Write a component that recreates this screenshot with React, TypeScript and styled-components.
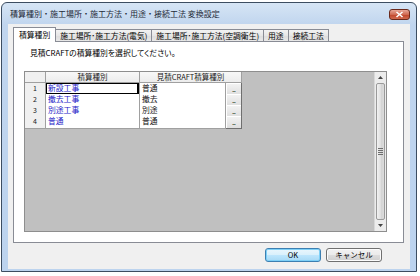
import styled, { createGlobalStyle } from "styled-components";

const GlobalStyle = createGlobalStyle`
  html, body {
    margin: 0;
    padding: 0;
    background: #ffffff;
  }
  body {
    font-family: "Noto Sans CJK JP", "Noto Sans", sans-serif;
    color: #000;
  }
`;

const Window = styled.div`
  box-sizing: border-box;
  width: 416px;
  height: 270px;
  margin: 2px 0 0 1px;
  border: 1px solid #3c4d61;
  border-radius: 6px 6px 0 0;
  background: linear-gradient(#d6e5f5, #c0d5ee 22px, #bcd3ee);
  padding: 0 6px 2px 6px;
  display: flex;
  flex-direction: column;
`;

const TitleBar = styled.div`
  height: 21px;
  display: flex;
  align-items: center;
  justify-content: space-between;
  padding-left: 2px;
`;

const Title = styled.span`
  font-size: 8px;
  line-height: 10px;
  color: #1e2a38;
`;

const CloseButton = styled.div`
  box-sizing: border-box;
  width: 21px;
  height: 11px;
  margin-top: 2px;
  border: 1px solid #6b2a1c;
  border-radius: 3px;
  background: linear-gradient(#e8a898, #d06a52 50%, #c0442a 51%, #d0684c);
  display: flex;
  align-items: center;
  justify-content: center;
`;

const Client = styled.div`
  flex: 1;
  background: #f0f0f0;
  display: flex;
  flex-direction: column;
  padding: 4px 6px 0 5px;
`;

const TabStrip = styled.div`
  display: flex;
  align-items: flex-end;
  height: 14px;
  margin-bottom: -1px;
  position: relative;
  z-index: 1;
`;

const Tab = styled.div<{ $active?: boolean }>`
  box-sizing: border-box;
  height: ${(p) => (p.$active ? "15px" : "13px")};
  padding: 0 ${(p) => (p.$active ? "5px" : "4px")};
  border: 1px solid #898c95;
  border-bottom: ${(p) => (p.$active ? "none" : "1px solid #898c95")};
  margin-left: ${(p) => (p.$active ? "0" : "-1px")};
  background: ${(p) =>
    p.$active ? "#ffffff" : "linear-gradient(#f3f3f3, #e6e6e6 50%, #dcdcdc 51%, #e8e8e8)"};
  font-size: 7.8px;
  line-height: ${(p) => (p.$active ? "13px" : "11px")};
  white-space: nowrap;
  &:first-child {
    margin-left: 0;
  }
`;

const Panel = styled.div`
  flex: 1;
  background: #ffffff;
  border: 1px solid #898c95;
  display: flex;
  flex-direction: column;
  padding: 6px 16px 10px 10px;
`;

const Hint = styled.div`
  font-size: 7.8px;
  line-height: 9px;
  margin: 0 0 14px 6px;
  font-feature-settings: "palt";
`;

const GridBox = styled.div`
  flex: 1;
  display: flex;
  border: 1px solid #8e8e8e;
  background: #c0c0c0;
`;

const Sheet = styled.div`
  flex: 1;
  display: flex;
  flex-direction: column;
  align-items: flex-start;
`;

const Row = styled.div`
  display: grid;
  grid-template-columns: 21px 94px 86px 16px;
  height: 11px;
`;

const HeadCell = styled.div<{ $span?: number }>`
  box-sizing: border-box;
  grid-column: span ${(p) => p.$span ?? 1};
  background: linear-gradient(#f8f8f8, #ececec);
  border-right: 1px solid #a0a0a0;
  border-bottom: 1px solid #a0a0a0;
  font-size: 7.5px;
  line-height: 10px;
  text-align: center;
  color: #1a1a1a;
`;

const NumCell = styled(HeadCell)`
  background: #f0f0f0;
  font-size: 7px;
`;

const Cell = styled.div<{ $blue?: boolean; $focus?: boolean }>`
  box-sizing: border-box;
  background: #ffffff;
  border-right: 1px solid #a0a0a0;
  border-bottom: 1px solid #a0a0a0;
  padding-left: 2px;
  font-size: 7.8px;
  line-height: 10px;
  color: ${(p) => (p.$blue ? "#1c1cc8" : "#111111")};
  white-space: nowrap;
  box-shadow: ${(p) => (p.$focus ? "inset 1px 1px 0 #000, inset -2px -2px 0 #000" : "none")};
`;

const DotButton = styled.div`
  box-sizing: border-box;
  border-right: 1px solid #6f6f6f;
  border-bottom: 1px solid #6f6f6f;
  background: linear-gradient(#f4f4f4, #dedede);
  box-shadow: inset 1px 1px 0 #ffffff;
  font-size: 7px;
  line-height: 12px;
  text-align: center;
  color: #333;
  letter-spacing: -1px;
`;

const ScrollBar = styled.div`
  width: 11px;
  display: flex;
  flex-direction: column;
  background: #ececec;
  border-left: 1px solid #d8d8d8;
`;

const ArrowButton = styled.div`
  height: 11px;
  display: flex;
  align-items: center;
  justify-content: center;
`;

const Thumb = styled.div`
  flex: 1;
  margin: 0 1px;
  border: 1px solid #9a9a9a;
  border-radius: 2px;
  background: linear-gradient(90deg, #f2f2f2, #e0e0e0 50%, #d2d2d2 51%, #dcdcdc);
  display: flex;
  flex-direction: column;
  align-items: center;
  justify-content: center;
  gap: 1px;
`;

const Grip = styled.div`
  width: 5px;
  height: 1px;
  background: #6e6e6e;
`;

const ButtonRow = styled.div`
  display: flex;
  justify-content: flex-end;
  gap: 5px;
  padding-right: 22px;
  margin: 5px 0 7px;
`;

const DialogButton = styled.div<{ $default?: boolean }>`
  box-sizing: border-box;
  width: 56px;
  height: 14px;
  border: 1px solid ${(p) => (p.$default ? "#3c7fb1" : "#707070")};
  border-radius: 3px;
  background: ${(p) =>
    p.$default
      ? "linear-gradient(#eaf6fd, #d9f0fc 50%, #bee6fd 51%, #a7d9f5)"
      : "linear-gradient(#f2f2f2, #ebebeb 50%, #dddddd 51%, #cfcfcf)"};
  box-shadow: ${(p) => (p.$default ? "inset 0 0 0 1px #7ed0f7" : "inset 0 0 0 1px #fcfcfc")};
  font-size: 7.5px;
  line-height: 12px;
  text-align: center;
`;

const rows = [
  { no: 1, kind: "新設工事", craft: "普通" },
  { no: 2, kind: "撤去工事", craft: "撤去" },
  { no: 3, kind: "別途工事", craft: "別途" },
  { no: 4, kind: "普通", craft: "普通" },
];

const tabs = [
  "積算種別",
  "施工場所･施工方法(電気)",
  "施工場所･施工方法(空調衛生)",
  "用途",
  "接続工法",
];

function App() {
  return (
    <>
      <GlobalStyle />
      <Window>
        <TitleBar>
          <Title>積算種別・施工場所・施工方法・用途・接続工法 変換設定</Title>
          <CloseButton>
            <svg width="9" height="7" viewBox="0 0 9 7">
              <path d="M1.5 1 L7.5 6 M7.5 1 L1.5 6" stroke="#ffffff" strokeWidth="1.6" />
            </svg>
          </CloseButton>
        </TitleBar>
        <Client>
          <TabStrip>
            {tabs.map((t, i) => (
              <Tab key={t} $active={i === 0}>
                {t}
              </Tab>
            ))}
          </TabStrip>
          <Panel>
            <Hint>見積CRAFTの積算種別を選択してください。</Hint>
            <GridBox>
              <Sheet>
                <Row>
                  <NumCell />
                  <HeadCell>積算種別</HeadCell>
                  <HeadCell $span={2}>見積CRAFT積算種別</HeadCell>
                </Row>
                {rows.map((r) => (
                  <Row key={r.no}>
                    <NumCell>{r.no}</NumCell>
                    <Cell $blue $focus={r.no === 1}>
                      {r.kind}
                    </Cell>
                    <Cell>{r.craft}</Cell>
                    <DotButton>...</DotButton>
                  </Row>
                ))}
              </Sheet>
              <ScrollBar>
                <ArrowButton>
                  <svg width="5" height="3" viewBox="0 0 5 3">
                    <path d="M0 3 L2.5 0 L5 3 Z" fill="#444" />
                  </svg>
                </ArrowButton>
                <Thumb>
                  <Grip />
                  <Grip />
                  <Grip />
                  <Grip />
                </Thumb>
                <ArrowButton>
                  <svg width="5" height="3" viewBox="0 0 5 3">
                    <path d="M0 0 L5 0 L2.5 3 Z" fill="#444" />
                  </svg>
                </ArrowButton>
              </ScrollBar>
            </GridBox>
          </Panel>
          <ButtonRow>
            <DialogButton $default>OK</DialogButton>
            <DialogButton>キャンセル</DialogButton>
          </ButtonRow>
        </Client>
      </Window>
    </>
  );
}

export default App;
